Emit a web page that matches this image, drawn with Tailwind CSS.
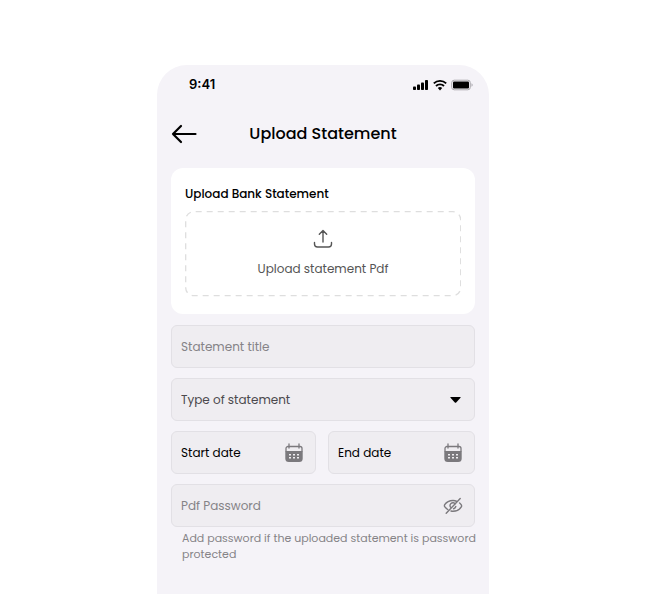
<!DOCTYPE html>
<html lang="en">
<head>
<meta charset="utf-8">
<meta name="viewport" content="width=device-width, initial-scale=1">
<title>Upload Statement</title>
<script src="https://cdn.jsdelivr.net/npm/@tailwindcss/browser@4"></script>
</head>
<body class="flex min-h-screen flex-col bg-white pt-[65px] font-[Poppins,Inter,sans-serif] text-black">
<svg class="hidden" aria-hidden="true">
  <symbol id="calendar" viewBox="0 0 20 20">
    <path d="M5 1v4M15 1v4M2 8V5.500a2 2 0 0 1 2-2h12a2 2 0 0 1 2 2V8" fill="none" stroke="currentColor" stroke-width="1.300" stroke-linecap="round"/>
    <path d="M1.300 8h17.400v7.500a3.500 3.500 0 0 1-3.500 3.500H4.800a3.500 3.500 0 0 1-3.500-3.500z" fill="currentColor"/>
    <path d="M5 11.700h2M9 11.700h2M13 11.700h2M5 14.700h2M9 14.700h2M13 14.700h2" stroke="#efedf1" stroke-width="1.400"/>
  </symbol>
</svg>
<div class="mx-auto flex w-full max-w-[332px] flex-1 flex-col rounded-t-[30px] bg-[#f5f3f8]">
  <div class="flex h-10 items-center justify-between pr-4 pl-8">
    <span class="font-[Inter,sans-serif] text-[13px] font-semibold">9:41</span>
    <div class="flex items-center gap-1">
      <svg class="h-3 w-4" viewBox="0 0 16 12" aria-hidden="true"><rect y="7.500" width="3" height="3.500" rx=".8"/><rect x="4" y="5.500" width="3" height="5.500" rx=".8"/><rect x="8" y="3.500" width="3" height="7.500" rx=".8"/><rect x="12" y="1" width="3" height="10" rx=".8"/></svg>
      <svg class="h-3 w-[14px]" viewBox="0 0 14 12" aria-hidden="true"><g fill="none" stroke="#000" stroke-width="1.900"><path d="M.8 4.400a9 9 0 0 1 12.400 0"/><path d="M3 7a5.700 5.700 0 0 1 8 0"/></g><path d="M7 11.400 4.800 9.100a3.100 3.100 0 0 1 4.400 0z"/></svg>
      <svg class="h-3 w-[22px]" viewBox="0 0 22 12" aria-hidden="true"><rect x=".7" y="1.200" width="18.600" height="9.600" rx="2.500" fill="none" stroke="#aaa8ad"/><rect x="2" y="2.600" width="16" height="6.800" rx="1"/><path d="M20.500 4.300q1.200.5 1.200 1.700t-1.200 1.700z" fill="#aaa8ad"/></svg>
    </div>
  </div>
  <header class="grid h-[58px] grid-cols-[26px_1fr_26px] items-center px-[14px]">
    <button type="button" aria-label="Back"><svg class="h-5 w-[26px]" viewBox="0 0 26 20" fill="none" stroke="#000" stroke-width="2.200" stroke-linecap="round" stroke-linejoin="round"><path d="M24.500 10H2M10 2 2 10l8 8"/></svg></button>
    <h1 class="text-center text-[16px] font-medium">Upload Statement</h1>
  </header>
  <form class="flex flex-col px-[14px] pt-[5px]">
    <section class="rounded-xl bg-white px-[14px] pt-4 pb-[17px]">
      <h2 class="text-[12px] leading-5 font-medium">Upload Bank Statement</h2>
      <button type="button" class="relative mt-[7px] flex h-[86px] w-full flex-col items-center gap-2 pt-[18px] text-[#555]">
        <svg class="absolute inset-0 size-full" aria-hidden="true"><rect x="0.700" y="0.700" class="h-[calc(100%-2px)] w-[calc(100%-1px)]" rx="8" fill="none" stroke="#dedede" stroke-width="1.300" stroke-dasharray="6 5" stroke-dashoffset="-2"/></svg>
        <svg class="size-5" viewBox="0 0 20 20" fill="none" stroke="currentColor" stroke-width="1.400" stroke-linecap="round" stroke-linejoin="round" aria-hidden="true"><path d="M10 13V2M6.300 5.300 10 1.600l3.700 3.700M1.500 13.500V15a3 3 0 0 0 3 3h11a3 3 0 0 0 3-3v-1.500"/></svg>
        <span class="text-[12px] leading-6">Upload statement Pdf</span>
      </button>
    </section>
    <div class="mt-[11px] flex flex-col gap-[10px] text-[12px]">
      <input type="text" aria-label="Statement title" placeholder="Statement title" class="h-[43px] w-full rounded-md border border-[#e2e0e5] bg-[#efedf1] px-[9px] pt-px placeholder:text-[#858387]">
      <div class="relative">
        <select aria-label="Type of statement" class="h-[43px] w-full appearance-none rounded-md border border-[#e2e0e5] bg-[#efedf1] px-[9px] pt-px text-[#4b494d]"><option>Type of statement</option></select>
        <svg class="pointer-events-none absolute top-[18px] right-[14px] h-2 w-[11px]" viewBox="0 0 11 8" aria-hidden="true"><path d="M.8 1h9.400q.8 0 .3.700L6.200 6.400q-.7.600-1.400 0L.5 1.700Q0 1 .8 1z"/></svg>
      </div>
      <div class="grid grid-cols-[minmax(0,145fr)_minmax(0,147fr)] gap-3">
        <label class="flex h-[43px] items-center rounded-md border border-[#e2e0e5] bg-[#efedf1] pr-[11px] pl-[9px]">
          <input type="text" aria-label="Start date" placeholder="Start date" class="min-w-0 flex-1 placeholder:text-black"><svg class="size-5 shrink-0 text-[#7b797d]" aria-hidden="true"><use href="#calendar"/></svg>
        </label>
        <label class="flex h-[43px] items-center rounded-md border border-[#e2e0e5] bg-[#efedf1] pr-[11px] pl-[9px]">
          <input type="text" aria-label="End date" placeholder="End date" class="min-w-0 flex-1 placeholder:text-black"><svg class="size-5 shrink-0 text-[#7b797d]" aria-hidden="true"><use href="#calendar"/></svg>
        </label>
      </div>
      <div class="flex h-[43px] items-center rounded-md border border-[#e2e0e5] bg-[#efedf1] pr-[11px] pl-[9px]">
        <input type="password" aria-label="Pdf Password" aria-describedby="hint" placeholder="Pdf Password" class="min-w-0 flex-1 placeholder:text-[#858387]">
        <button type="button" aria-label="Show password"><svg class="size-5" viewBox="0 0 20 20" fill="none" stroke="#7b797d" stroke-width="1.400" stroke-linecap="round" stroke-linejoin="round"><path d="M14 5.500C12.800 4.900 11.400 4.500 10 4.500 6 4.500 3 6.700 1.700 8.700q-.6 1 0 2c.7 1.100 1.700 2 3 2.800M8 15q1 .2 2 .2c4 0 7-2.200 8.300-4.300q.6-1 0-2-.7-1.100-1.700-1.900M12.300 8A2.900 2.900 0 1 0 8 11.800M12.800 10.500a2.900 2.900 0 0 1-2.300 2.200M17.200 2.500 3.200 17.300"/></svg></button>
      </div>
    </div>
    <p id="hint" class="-mr-2 mt-[3px] pl-[11px] text-[11px] leading-4 text-[#858387]">Add password if the uploaded statement is password protected</p>
  </form>
</div>
</body>
</html>
